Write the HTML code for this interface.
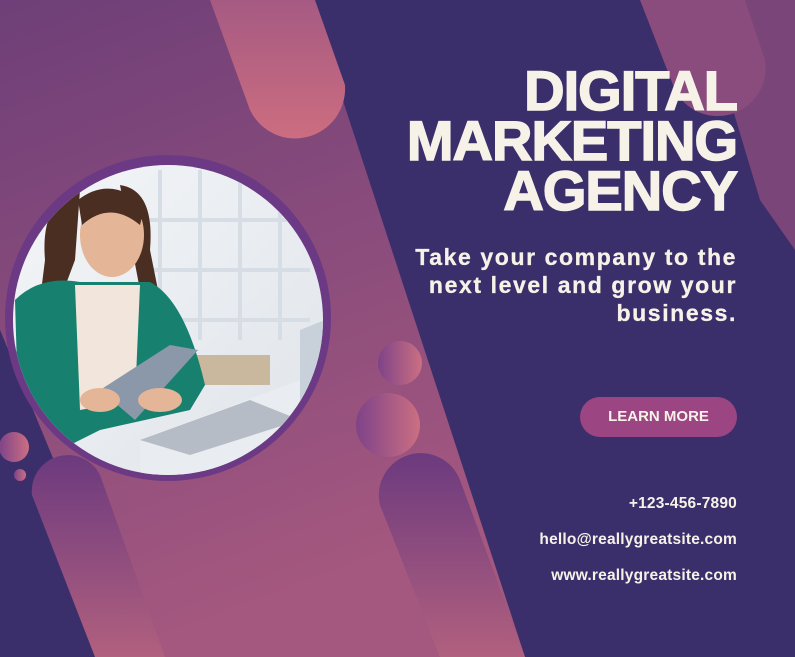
<!DOCTYPE html>
<html><head><style>
body{margin:0;width:795px;height:657px;overflow:hidden;background:#3a2f6b;font-family:"Liberation Sans",sans-serif;position:relative}
svg{position:absolute;left:0;top:0}
.t{position:absolute;right:58px;text-align:right;color:#f7f2e8;font-weight:bold;white-space:nowrap}
</style></head><body>
<svg width="795" height="657" viewBox="0 0 795 657">
<defs>
<linearGradient id="band" x1="0" y1="0" x2="0.3" y2="1"><stop offset="0" stop-color="#6e3f78"/><stop offset="1" stop-color="#a5587f"/></linearGradient>
<linearGradient id="pk" x1="0" y1="0" x2="0" y2="1"><stop offset="0" stop-color="#a65a82"/><stop offset="1" stop-color="#cc6d80"/></linearGradient>
<linearGradient id="bp" x1="0" y1="0" x2="0" y2="1"><stop offset="0" stop-color="#6c3a7e"/><stop offset="1" stop-color="#b1607e"/></linearGradient>
<linearGradient id="ball" x1="0" y1="0" x2="1" y2="0"><stop offset="0" stop-color="#7e4388"/><stop offset="1" stop-color="#cc6f82"/></linearGradient>
<linearGradient id="ph" x1="0" y1="0" x2="1" y2="1"><stop offset="0" stop-color="#f4f6f8"/><stop offset="1" stop-color="#dfe4ea"/></linearGradient>
<clipPath id="cp"><ellipse cx="168" cy="320" rx="155" ry="155"/></clipPath>
</defs>
<polygon points="0,0 310,0 525,657 135,657 0,330" fill="url(#band)"/>
<polygon points="0,330 135,657 0,657" fill="#3a2f6b"/>
<polygon points="700,0 795,0 795,250 760,200" fill="#7a4579"/>
<path d="M245,0 L315,0 L345,85 A50,50 0 0 1 250,110 L210,0Z" fill="url(#pk)"/>
<path d="M655,0 L745,0 L765,60 A48,48 0 0 1 675,90 L640,0Z" fill="#8a4c7c"/>
<path d="M32,495 A36,36 0 0 1 100,475 L165,657 L95,657 Z" fill="url(#bp)"/>
<path d="M380,505 A42,42 0 0 1 460,480 L525,657 L440,657 Z" fill="url(#bp)"/>
<circle cx="400" cy="363" r="22" fill="url(#ball)"/>
<circle cx="388" cy="425" r="32" fill="url(#ball)"/>
<circle cx="14" cy="447" r="15" fill="url(#ball)"/>
<circle cx="20" cy="475" r="6" fill="url(#ball)"/>
<ellipse cx="168" cy="318" rx="163" ry="163" fill="#6c3a85"/>
<g clip-path="url(#cp)">
<rect x="0" y="160" width="330" height="320" fill="url(#ph)"/>
<g stroke="#d6dde4" stroke-width="4">
<line x1="160" y1="170" x2="160" y2="340"/><line x1="200" y1="170" x2="200" y2="340"/><line x1="240" y1="170" x2="240" y2="340"/><line x1="280" y1="170" x2="280" y2="340"/>
<line x1="150" y1="220" x2="310" y2="220"/><line x1="150" y1="270" x2="310" y2="270"/><line x1="150" y1="320" x2="310" y2="320"/></g>
<rect x="180" y="355" width="90" height="30" fill="#c9b79e"/>
<path d="M140,440 L300,380 L330,400 L330,480 L140,480Z" fill="#e9edf1"/>
<path d="M140,440 L250,400 L300,420 L190,455Z" fill="#b5bcc5"/>
<path d="M300,330 L325,320 L325,420 L300,430Z" fill="#c8d1da"/>
<path d="M80,190 Q40,200 45,260 L40,300 L60,300 L75,260 Z" fill="#4a2e22"/>
<path d="M120,185 Q155,190 150,250 L160,300 L140,290 Z" fill="#4a2e22"/>
<ellipse cx="112" cy="235" rx="32" ry="42" fill="#e4b597"/>
<path d="M78,200 Q110,175 145,205 L140,225 Q110,200 82,225Z" fill="#4a2e22"/>
<path d="M15,300 Q40,275 80,282 L150,282 Q185,300 205,385 L190,410 L100,430 L20,470 Z" fill="#17806f"/>
<path d="M75,285 L140,285 L135,400 L80,410 Z" fill="#f1e5dc"/>
<path d="M100,390 L170,345 L198,350 L135,420 Z" fill="#8b98aa"/>
<ellipse cx="100" cy="400" rx="20" ry="12" fill="#e4b597"/>
<ellipse cx="160" cy="400" rx="22" ry="12" fill="#e4b597"/>
</g>
</svg>
<div class="t" style="top:66px;font-size:56px;line-height:50px;letter-spacing:-1px;-webkit-text-stroke:1.5px #f7f2e8">DIGITAL<br>MARKETING<br>AGENCY</div>
<div class="t" style="top:243px;font-size:23px;line-height:28px;letter-spacing:1.6px;-webkit-text-stroke:0.3px #f7f2e8">Take your company to the<br>next level and grow your<br>business.</div>
<div style="position:absolute;left:580px;top:397px;width:157px;height:40px;border-radius:20px;background:#9b4583;color:#f7f2e8;font-weight:bold;font-size:15px;line-height:40px;text-align:center">LEARN MORE</div>
<div class="t" style="top:495px;font-size:15.5px;letter-spacing:0.2px">+123-456-7890</div>
<div class="t" style="top:531px;font-size:15.5px;letter-spacing:0.2px">hello@reallygreatsite.com</div>
<div class="t" style="top:567px;font-size:15.5px;letter-spacing:0.2px">www.reallygreatsite.com</div>
</body></html>
